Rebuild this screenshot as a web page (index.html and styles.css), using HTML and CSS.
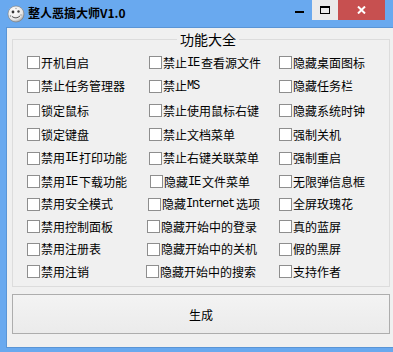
FILE: index.html
```html
<!DOCTYPE html>
<html lang="zh-CN">
<head>
<meta charset="utf-8">
<title>整人恶搞大师V1.0</title>
<link rel="stylesheet" href="styles.css">
</head>
<body>
<div class="window">
  <div class="titlebar">
    <svg class="app-icon" width="18" height="18" viewBox="0 0 18 18">
      <defs>
        <radialGradient id="g" cx="0.4" cy="0.35" r="0.7">
          <stop offset="0" stop-color="#ffffff"/>
          <stop offset="0.7" stop-color="#e8e8e8"/>
          <stop offset="1" stop-color="#9a9a9a"/>
        </radialGradient>
      </defs>
      <circle cx="9" cy="9" r="8" fill="url(#g)" stroke="#7a7a7a" stroke-width="0.6"/>
      <circle cx="6" cy="7" r="1.4" fill="#333"/>
      <circle cx="11.5" cy="6.5" r="1.2" fill="#444"/>
      <path d="M5 11.5 Q9 14.5 13 11" fill="none" stroke="#555" stroke-width="1"/>
      <circle cx="3.5" cy="11" r="0.8" fill="#888"/>
      <circle cx="14" cy="10" r="0.7" fill="#888"/>
      <circle cx="9" cy="3.5" r="0.7" fill="#999"/>
    </svg>
    <span class="title">整人恶搞大师V1.0</span>
    <div class="controls">
      <div class="ctl min"><span class="dash"></span></div>
      <div class="ctl max"><span class="maxbox"></span></div>
      <div class="ctl close">
        <svg width="9" height="8" viewBox="0 0 9 8"><path d="M1 0.5 L8 7.5 M8 0.5 L1 7.5" stroke="#fff" stroke-width="2"/></svg>
      </div>
    </div>
  </div>
  <div class="client">
    <fieldset class="group">
      <legend>功能大全</legend>
      <div class="grid">
        <label class="item"><span class="box"></span>开机自启</label>
        <label class="item"><span class="box"></span>禁止<span class="lat">IE</span>查看源文件</label>
        <label class="item"><span class="box"></span>隐藏桌面图标</label>

        <label class="item"><span class="box"></span>禁止任务管理器</label>
        <label class="item"><span class="box"></span>禁止<span class="lat">MS</span></label>
        <label class="item"><span class="box"></span>隐藏任务栏</label>

        <label class="item"><span class="box"></span>锁定鼠标</label>
        <label class="item"><span class="box"></span>禁止使用鼠标右键</label>
        <label class="item"><span class="box"></span>隐藏系统时钟</label>

        <label class="item"><span class="box"></span>锁定键盘</label>
        <label class="item"><span class="box"></span>禁止文档菜单</label>
        <label class="item"><span class="box"></span>强制关机</label>

        <label class="item"><span class="box"></span>禁用<span class="lat">IE</span>打印功能</label>
        <label class="item"><span class="box"></span>禁止右键关联菜单</label>
        <label class="item"><span class="box"></span>强制重启</label>

        <label class="item"><span class="box"></span>禁用<span class="lat">IE</span>下载功能</label>
        <label class="item r1"><span class="box"></span>隐藏<span class="lat">IE</span>文件菜单</label>
        <label class="item"><span class="box"></span>无限弹信息框</label>

        <label class="item"><span class="box"></span>禁用安全模式</label>
        <label class="item l1"><span class="box"></span>隐藏<span class="lat">Internet</span>选项</label>
        <label class="item"><span class="box"></span>全屏玫瑰花</label>

        <label class="item"><span class="box"></span>禁用控制面板</label>
        <label class="item l2"><span class="box"></span>隐藏开始中的登录</label>
        <label class="item"><span class="box"></span>真的蓝屏</label>

        <label class="item"><span class="box"></span>禁用注册表</label>
        <label class="item l2"><span class="box"></span>隐藏开始中的关机</label>
        <label class="item"><span class="box"></span>假的黑屏</label>

        <label class="item"><span class="box"></span>禁用注销</label>
        <label class="item l3"><span class="box"></span>隐藏开始中的搜索</label>
        <label class="item"><span class="box"></span>支持作者</label>
      </div>
    </fieldset>
    <button class="gen">生成</button>
  </div>
</div>
</body>
</html>
```

FILE: styles.css
```css
html, body {
  margin: 0;
  padding: 0;
}
body {
  width: 393px;
  height: 352px;
  overflow: hidden;
  font-family: "Noto Sans CJK SC", "Liberation Sans", sans-serif;
  font-size: 12px;
  color: #000;
}
.window {
  width: 393px;
  height: 352px;
  background: #69a9ef;
  display: flex;
  flex-direction: column;
}
.titlebar {
  height: 27px;
  display: flex;
  align-items: flex-start;
}
.app-icon {
  margin: 5px 0 0 7px;
  flex: none;
}
.title {
  margin: 4px 0 0 3px;
  font-weight: bold;
  font-size: 12px;
  line-height: 18px;
  color: #000;
}
.controls {
  margin-left: auto;
  margin-right: 8px;
  display: flex;
}
.ctl {
  height: 20px;
  display: flex;
  align-items: center;
  justify-content: center;
}
.min {
  width: 26px;
}
.dash {
  width: 9px;
  height: 2px;
  background: #000;
  margin-top: 4px;
}
.max {
  width: 26px;
  background: #ebebeb;
}
.maxbox {
  width: 8px;
  height: 5px;
  border: 1px solid #000;
  border-top-width: 2px;
  margin-top: -1px;
}
.close {
  width: 47px;
  background: #c75050;
}
.client {
  margin-left: 6px;
  width: 378px;
  height: 317px;
  border: 1px solid #5a95d6;
  background: #f0f0f0;
  padding: 2px 5px 0 5px;
  box-sizing: content-box;
  display: flex;
  flex-direction: column;
}
.group {
  margin: 0;
  padding: 3px 0 3px 14px;
  border: 1px solid #dcdcdc;
  min-width: 0;
}
.group legend {
  margin-left: auto;
  margin-right: auto;
  padding: 0 3px;
  font-size: 14px;
  line-height: 18px;
}
.grid {
  display: grid;
  grid-template-columns: 122px 130px 1fr;
  grid-template-rows: 23px 24px 25px 23px 24px 23px 22px 23px 22px 23px;
}
.item {
  display: flex;
  align-items: center;
  gap: 1px;
  white-space: nowrap;
  line-height: 14px;
}
.item.r1 { margin-left: 1px; }
.item.l1 { margin-left: -1px; }
.item.l2 { margin-left: -2px; }
.item.l3 { margin-left: -3px; }
.box {
  flex: none;
  width: 11px;
  height: 11px;
  border: 1px solid #8e8e8e;
  background: #fff;
}
.lat {
  font-family: "Liberation Mono", "DejaVu Sans Mono", monospace;
  font-size: 12px;
  letter-spacing: -1.2px;
  margin-left: -1px;
  margin-right: 1px;
}
.gen {
  margin-top: 7px;
  height: 40px;
  width: 100%;
  border: 1px solid #adadad;
  background: linear-gradient(#f3f3f3, #ebebeb);
  font-family: "Noto Sans CJK SC", "Liberation Sans", sans-serif;
  font-size: 12px;
  color: #000;
  padding: 0;
}
```
